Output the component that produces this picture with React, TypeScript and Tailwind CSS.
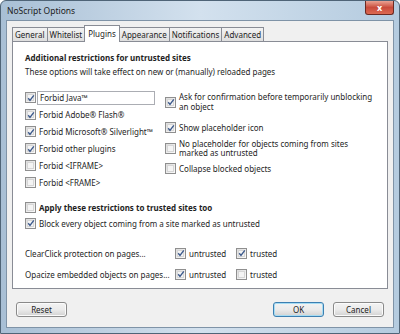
const font = { fontFamily: '"Segoe UI", "Noto Sans", "Open Sans", sans-serif' };

function Box({ checked }: { checked?: boolean }) {
  return (
    <span className="flex h-[11px] w-[11px] shrink-0 items-center justify-center border border-[#8f8f8f] bg-gradient-to-br from-[#dcdcdc] to-[#fbfbfb]">
      <span className="flex h-[7px] w-[7px] items-center justify-center border border-[#d6d6d6] bg-[#f4f4f4]">
        {checked && (
          <svg width="8" height="8" viewBox="0 0 8 8" className="shrink-0">
            <path d="M1.2 4.2 L3 6.4 L6.8 1.4" fill="none" stroke="#3d5a8c" strokeWidth="1.4" />
          </svg>
        )}
      </span>
    </span>
  );
}

function Row({ checked, children, bold, h = "h-[17px]" }: { checked?: boolean; children: React.ReactNode; bold?: boolean; h?: string }) {
  return (
    <div className={"flex items-center gap-[3px] whitespace-nowrap " + h}>
      <Box checked={checked} />
      <span className={bold ? "font-bold" : ""}>{children}</span>
    </div>
  );
}

function Btn({ label, focus }: { label: string; focus?: boolean }) {
  return (
    <button
      className={
        "h-[15px] w-[51px] rounded-[3px] border text-[8px] leading-none text-[#222] bg-gradient-to-b from-[#f3f3f3] via-[#ebebeb] to-[#d2d2d2] " +
        (focus ? "border-[#3c7fb1] shadow-[inset_0_0_0_1px_#a6dcf3]" : "border-[#8a8a8a] shadow-[inset_0_0_0_1px_#fbfbfb]")
      }
    >
      {label}
    </button>
  );
}

export default function App() {
  const tabs = ["General", "Whitelist", "Plugins", "Appearance", "Notifications", "Advanced"];
  return (
    <div
      style={font}
      className="flex h-[334px] w-[400px] flex-col overflow-hidden rounded-t-[6px] border border-[#4f6477] bg-gradient-to-r from-[#a8bfd5] via-[#d3e1ee] to-[#b4cbdf] text-[8px] leading-[11px] text-[#1e1e1e]"
    >
      {/* title bar */}
      <div className="flex h-[19px] shrink-0 items-start justify-between pl-[6px] pr-[5px]">
        <span className="mt-[4px] text-[8.5px] text-[#1c1c1c]">NoScript Options</span>
        <div className="flex h-[14px] w-[29px] items-center justify-center rounded-b-[3px] border border-t-0 border-[#6b2a22] bg-gradient-to-b from-[#e9a293] via-[#c94b3c] to-[#dc6a52]">
          <span className="text-[9px] font-bold leading-none text-white">x</span>
        </div>
      </div>

      {/* client area */}
      <div className="mx-[5px] mb-[5px] flex flex-1 flex-col border border-[#7f93a7] bg-[#f0f0f0] px-[5px] pt-[4px]">
        {/* tabs */}
        <div className="flex h-[16px] items-end whitespace-nowrap">
          {tabs.map((t) =>
            t === "Plugins" ? (
              <div
                key={t}
                className="relative z-10 -mb-px -ml-px flex h-[17px] items-center border border-b-0 border-[#898c95] bg-white px-[3px] pb-[2px]"
              >
                {t}
              </div>
            ) : (
              <div
                key={t}
                className="-ml-px flex h-[14px] items-center border border-b-0 border-[#898c95] bg-gradient-to-b from-[#f3f3f3] to-[#dedede] px-[2px] first:ml-0"
              >
                {t}
              </div>
            )
          )}
        </div>

        {/* panel */}
        <div className="flex h-[248px] flex-col border border-[#898c95] bg-white pl-[12px] pr-[10px] pt-[10px] whitespace-nowrap">
          <div className="font-bold">Additional restrictions for untrusted sites</div>
          <div className="mt-[3px]">These options will take effect on new or (manually) reloaded pages</div>

          <div className="mt-[12px] flex">
            <div className="flex w-[140px] shrink-0 flex-col">
              <div className="flex h-[17px] items-center gap-[1px]">
                <Box checked />
                <div className="h-[14px] w-[118px] border border-[#abadb3] pl-[2px] leading-[12px]">Forbid Java™</div>
              </div>
              <Row checked>Forbid Adobe® Flash®</Row>
              <Row checked>Forbid Microsoft® Silverlight™</Row>
              <Row checked>Forbid other plugins</Row>
              <Row>Forbid &lt;IFRAME&gt;</Row>
              <Row>Forbid &lt;FRAME&gt;</Row>
            </div>
            <div className="flex flex-col">
              <div className="mt-[3px] flex h-[20px] items-center gap-[3px]">
                <Box checked />
                <span className="leading-[10px]">
                  Ask for confirmation before temporarily unblocking
                  <br />
                  an object
                </span>
              </div>
              <div className="mt-[10px] flex h-[11px] items-center gap-[3px]">
                <Box checked />
                <span>Show placeholder icon</span>
              </div>
              <div className="mt-[5px] flex h-[20px] items-center gap-[3px]">
                <Box />
                <span className="leading-[9.5px]">
                  No placeholder for objects coming from sites
                  <br />
                  marked as untrusted
                </span>
              </div>
              <div className="mt-[5px] flex h-[11px] items-center gap-[3px]">
                <Box />
                <span>Collapse blocked objects</span>
              </div>
            </div>
          </div>

          <div className="mt-[8px] flex flex-col">
            <Row bold h="h-[16px]">Apply these restrictions to trusted sites too</Row>
            <Row checked h="h-[16px]">Block every object coming from a site marked as untrusted</Row>
          </div>

          <div className="mt-[14px] flex flex-col gap-[5px]">
            {[
              ["ClearClick protection on pages...", true, true],
              ["Opacize embedded objects on pages...", true, false],
            ].map(([label, u, tr]) => (
              <div key={label as string} className="flex h-[16px] items-center">
                <span className="w-[150px] shrink-0">{label as string}</span>
                <div className="flex w-[61px] items-center gap-[3px]">
                  <Box checked={u as boolean} />
                  <span>untrusted</span>
                </div>
                <div className="flex items-center gap-[3px]">
                  <Box checked={tr as boolean} />
                  <span>trusted</span>
                </div>
              </div>
            ))}
          </div>
        </div>

        {/* buttons */}
        <div className="mt-[13px] flex items-center pl-[4px] pr-[4px]">
          <Btn label="Reset" />
          <div className="flex-1" />
          <div className="flex gap-[9px]">
            <Btn label="OK" focus />
            <Btn label="Cancel" />
          </div>
        </div>
      </div>
    </div>
  );
}
